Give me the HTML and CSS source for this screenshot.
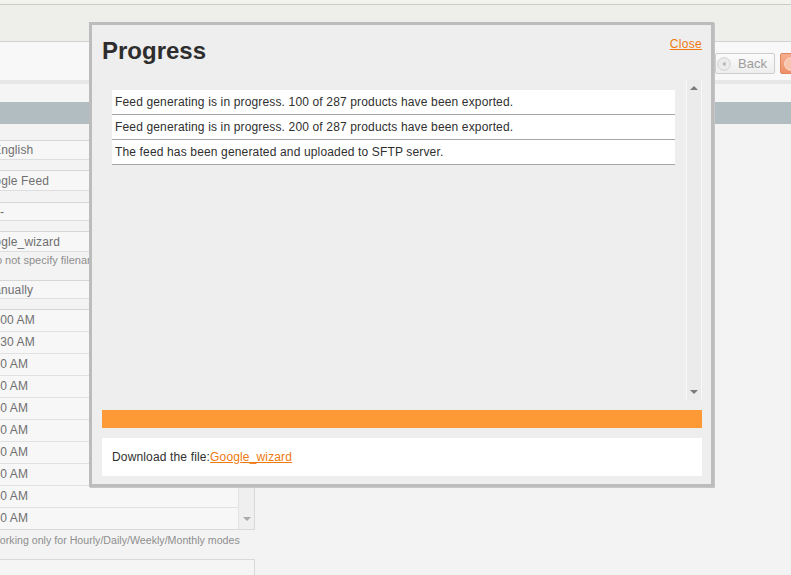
FILE: index.html
```html
<!DOCTYPE html>
<html lang="en">
<head>
<meta charset="utf-8">
<title>Progress</title>
<link rel="stylesheet" href="styles.css">
</head>
<body>
<div class="page">
  <div class="topstrip"></div>
  <div class="header"></div>
  <div class="toolbar">
    <button class="btn btn-back" type="button">
      <svg class="btn-icon" width="14" height="14" viewBox="0 0 14 14"><circle cx="7" cy="7" r="6.3" fill="#ececec" stroke="#d0d0d0" stroke-width="1"/><path d="M8.5 4.5 L5 7 L8.5 9.5 Z" fill="#b4b4b4"/></svg>
      <span>Back</span>
    </button>
    <button class="btn btn-orange" type="button">
      <svg class="btn-icon" width="14" height="14" viewBox="0 0 14 14"><circle cx="7" cy="7" r="6.3" fill="#f7c4ac" stroke="#fbe0d3" stroke-width="1"/></svg>
      <span>Continue</span>
    </button>
  </div>
  <div class="strip"></div>
  <div class="spacer"></div>
  <div class="gridbar"></div>
  <div class="content">
    <div class="form">
      <div class="field sel pad-eng">English</div>
      <div class="field inp">Google Feed</div>
      <div class="field sel pad-dash">-</div>
      <div class="field inp">Google_wizard</div>
      <div class="note note1">Do not specify filename extension</div>
      <div class="field sel pad-sel">Manually</div>
      <div class="list">
        <div class="list-rows">
          <div class="list-row">12:00 AM</div>
          <div class="list-row">12:30 AM</div>
          <div class="list-row">1:00 AM</div>
          <div class="list-row">1:30 AM</div>
          <div class="list-row">2:00 AM</div>
          <div class="list-row">2:30 AM</div>
          <div class="list-row">3:00 AM</div>
          <div class="list-row">3:30 AM</div>
          <div class="list-row">4:00 AM</div>
          <div class="list-row">4:30 AM</div>
        </div>
        <div class="list-scroll"><span class="tri-down small"></span></div>
      </div>
      <div class="note note2">Working only for Hourly/Daily/Weekly/Monthly modes</div>
      <div class="box"></div>
    </div>
  </div>
</div>

<div class="modal">
  <div class="modal-head">
    <h1 class="modal-title">Progress</h1>
    <a class="close" href="#">Close</a>
  </div>
  <div class="log">
    <div class="log-list">
      <div class="log-row">Feed generating is in progress. 100 of 287 products have been exported.</div>
      <div class="log-row">Feed generating is in progress. 200 of 287 products have been exported.</div>
      <div class="log-row">The feed has been generated and uploaded to SFTP server.</div>
    </div>
    <div class="scrollbar">
      <span class="tri-up"></span>
      <span class="tri-down"></span>
    </div>
  </div>
  <div class="progress-bar"></div>
  <div class="download">Download the file:<a href="#">Google_wizard</a></div>
</div>
</body>
</html>
```

FILE: styles.css
```css
html, body {
  margin: 0;
  padding: 0;
}
body {
  width: 791px;
  height: 575px;
  overflow: hidden;
  background: #f3f3f3;
  font-family: "Liberation Sans", Arial, sans-serif;
  font-size: 12px;
  letter-spacing: 0.15px;
  position: relative;
}
.page {
  width: 791px;
}
.topstrip {
  height: 4px;
  background: #f2f2ef;
}
.header {
  height: 36px;
  background: #eeeeea;
  border-top: 1px solid #c9cec5;
  border-bottom: 1px solid #d2d2d0;
}
.toolbar {
  height: 38px;
  background: #f8f8f8;
  display: flex;
  justify-content: flex-end;
  align-items: flex-start;
  gap: 5px;
}
.btn {
  margin-top: 11px;
  height: 21px;
  box-sizing: border-box;
  display: flex;
  align-items: center;
  font-family: "Liberation Sans", Arial, sans-serif;
  font-size: 13px;
  letter-spacing: 0;
  border-radius: 2px;
  padding: 0;
}
.btn-back {
  width: 60px;
  border: 1px solid #cdcdcd;
  background: linear-gradient(#fbfbfb, #eeeeee);
  color: #9d9d9d;
  padding-left: 1px;
  gap: 7px;
}
.btn-orange {
  width: 90px;
  margin-right: -79px;
  border: 1px solid #e3865e;
  background: linear-gradient(#f6ae8e, #ee9068);
  color: #ffffff;
  padding-left: 3px;
  gap: 6px;
}
.btn-icon {
  flex: none;
  display: block;
}
.strip {
  height: 4px;
  background: #e7e7e7;
}
.spacer {
  height: 18px;
  background: #f5f5f5;
}
.gridbar {
  height: 22px;
  background: #b1bdc0;
}
.content {
  padding-top: 16px;
}
.form {
  width: 278px;
  margin-left: -23px;
  color: #6f6f6f;
}
.field {
  box-sizing: border-box;
  background: #f7f7f7;
  border: 1px solid #d6d6d6;
  border-bottom-color: #dedede;
  white-space: nowrap;
  overflow: hidden;
}
.sel {
  height: 19px;
  line-height: 18px;
  margin-bottom: 10px;
  padding-left: 6px;
}
.inp {
  height: 21px;
  line-height: 20px;
  margin-bottom: 11px;
  padding-left: 0;
}
.pad-eng {
  height: 20px;
  line-height: 18px;
  padding-left: 15px;
}
.pad-dash {
  padding-left: 22px;
}
.pad-sel {
  padding-left: 6px;
}
.inp + .note1 {
  margin-top: -11px;
}
.note {
  font-size: 11px;
  letter-spacing: 0;
  color: #8e8e8e;
  white-space: nowrap;
  overflow: hidden;
}
.note1 {
  line-height: 16px;
  padding-left: 11px;
  margin-bottom: 12px;
}
.list {
  display: flex;
  background: #f7f7f7;
  border-top: 1px solid #d6d6d6;
  border-right: 1px solid #dadada;
}
.list-rows {
  flex: 1;
}
.list-row {
  height: 21px;
  line-height: 21px;
  padding-left: 6px;
  border-bottom: 1px solid #e2e2e2;
  white-space: nowrap;
}
.list-row:last-child {
  border-bottom-color: #dadada;
}
.list-scroll {
  width: 16px;
  background: #efefef;
  border-left: 1px solid #e3e3e3;
  border-bottom: 1px solid #dadada;
  display: flex;
  flex-direction: column;
  justify-content: flex-end;
  align-items: center;
  padding-bottom: 8px;
  box-sizing: border-box;
}
.note2 {
  font-size: 10.65px;
  line-height: 20px;
  padding-left: 13px;
  margin-bottom: 9px;
}
.box {
  height: 40px;
  background: #f5f5f5;
  border: 1px solid #d9d9d9;
}

/* modal */
.modal {
  position: absolute;
  left: 89px;
  top: 22px;
  width: 625px;
  height: 465px;
  box-sizing: border-box;
  border: 3px solid #bcbcbc;
  box-shadow: 1px 1px 0 #c6c6c6;
  background: #eeeeee;
  padding: 12px 9px 8px 10px;
  display: flex;
  flex-direction: column;
}
.modal-head {
  height: 28px;
  display: flex;
  justify-content: space-between;
  align-items: flex-start;
}
.modal-title {
  margin: 0;
  font-size: 24px;
  line-height: 28px;
  font-weight: bold;
  letter-spacing: 0;
  color: #2d2d2d;
}
.close {
  font-size: 12px;
  line-height: 14px;
  letter-spacing: 0.3px;
  color: #ee7a10;
  text-decoration: underline;
}
.log {
  margin-top: 15px;
  height: 320px;
  display: flex;
}
.log-list {
  flex: 1;
  padding: 10px 11px 0 10px;
}
.log-row {
  background: #ffffff;
  border-bottom: 1px solid #a6a6a6;
  padding: 1px 0 1px 3px;
  line-height: 22px;
  color: #2f2f2f;
  white-space: nowrap;
}
.scrollbar {
  width: 16px;
  box-sizing: border-box;
  background: #ebebeb;
  border-left: 1px solid #f8f8f8;
  border-right: 1px solid #f8f8f8;
  display: flex;
  flex-direction: column;
  justify-content: space-between;
  align-items: center;
  padding: 6px 0 6px;
}
.tri-up {
  width: 0;
  height: 0;
  border-left: 4px solid transparent;
  border-right: 4px solid transparent;
  border-bottom: 4px solid #7a7a7a;
}
.tri-down {
  width: 0;
  height: 0;
  border-left: 4px solid transparent;
  border-right: 4px solid transparent;
  border-top: 4px solid #7a7a7a;
}
.tri-down.small {
  border-top-color: #a9a9a9;
}
.progress-bar {
  margin-top: 10px;
  height: 18px;
  background: #fe9a35;
}
.download {
  margin-top: 10px;
  height: 38px;
  background: #ffffff;
  padding: 0 10px;
  line-height: 38px;
  color: #2f2f2f;
  white-space: nowrap;
}
.download a {
  color: #ee7a10;
  text-decoration: underline;
}
```
